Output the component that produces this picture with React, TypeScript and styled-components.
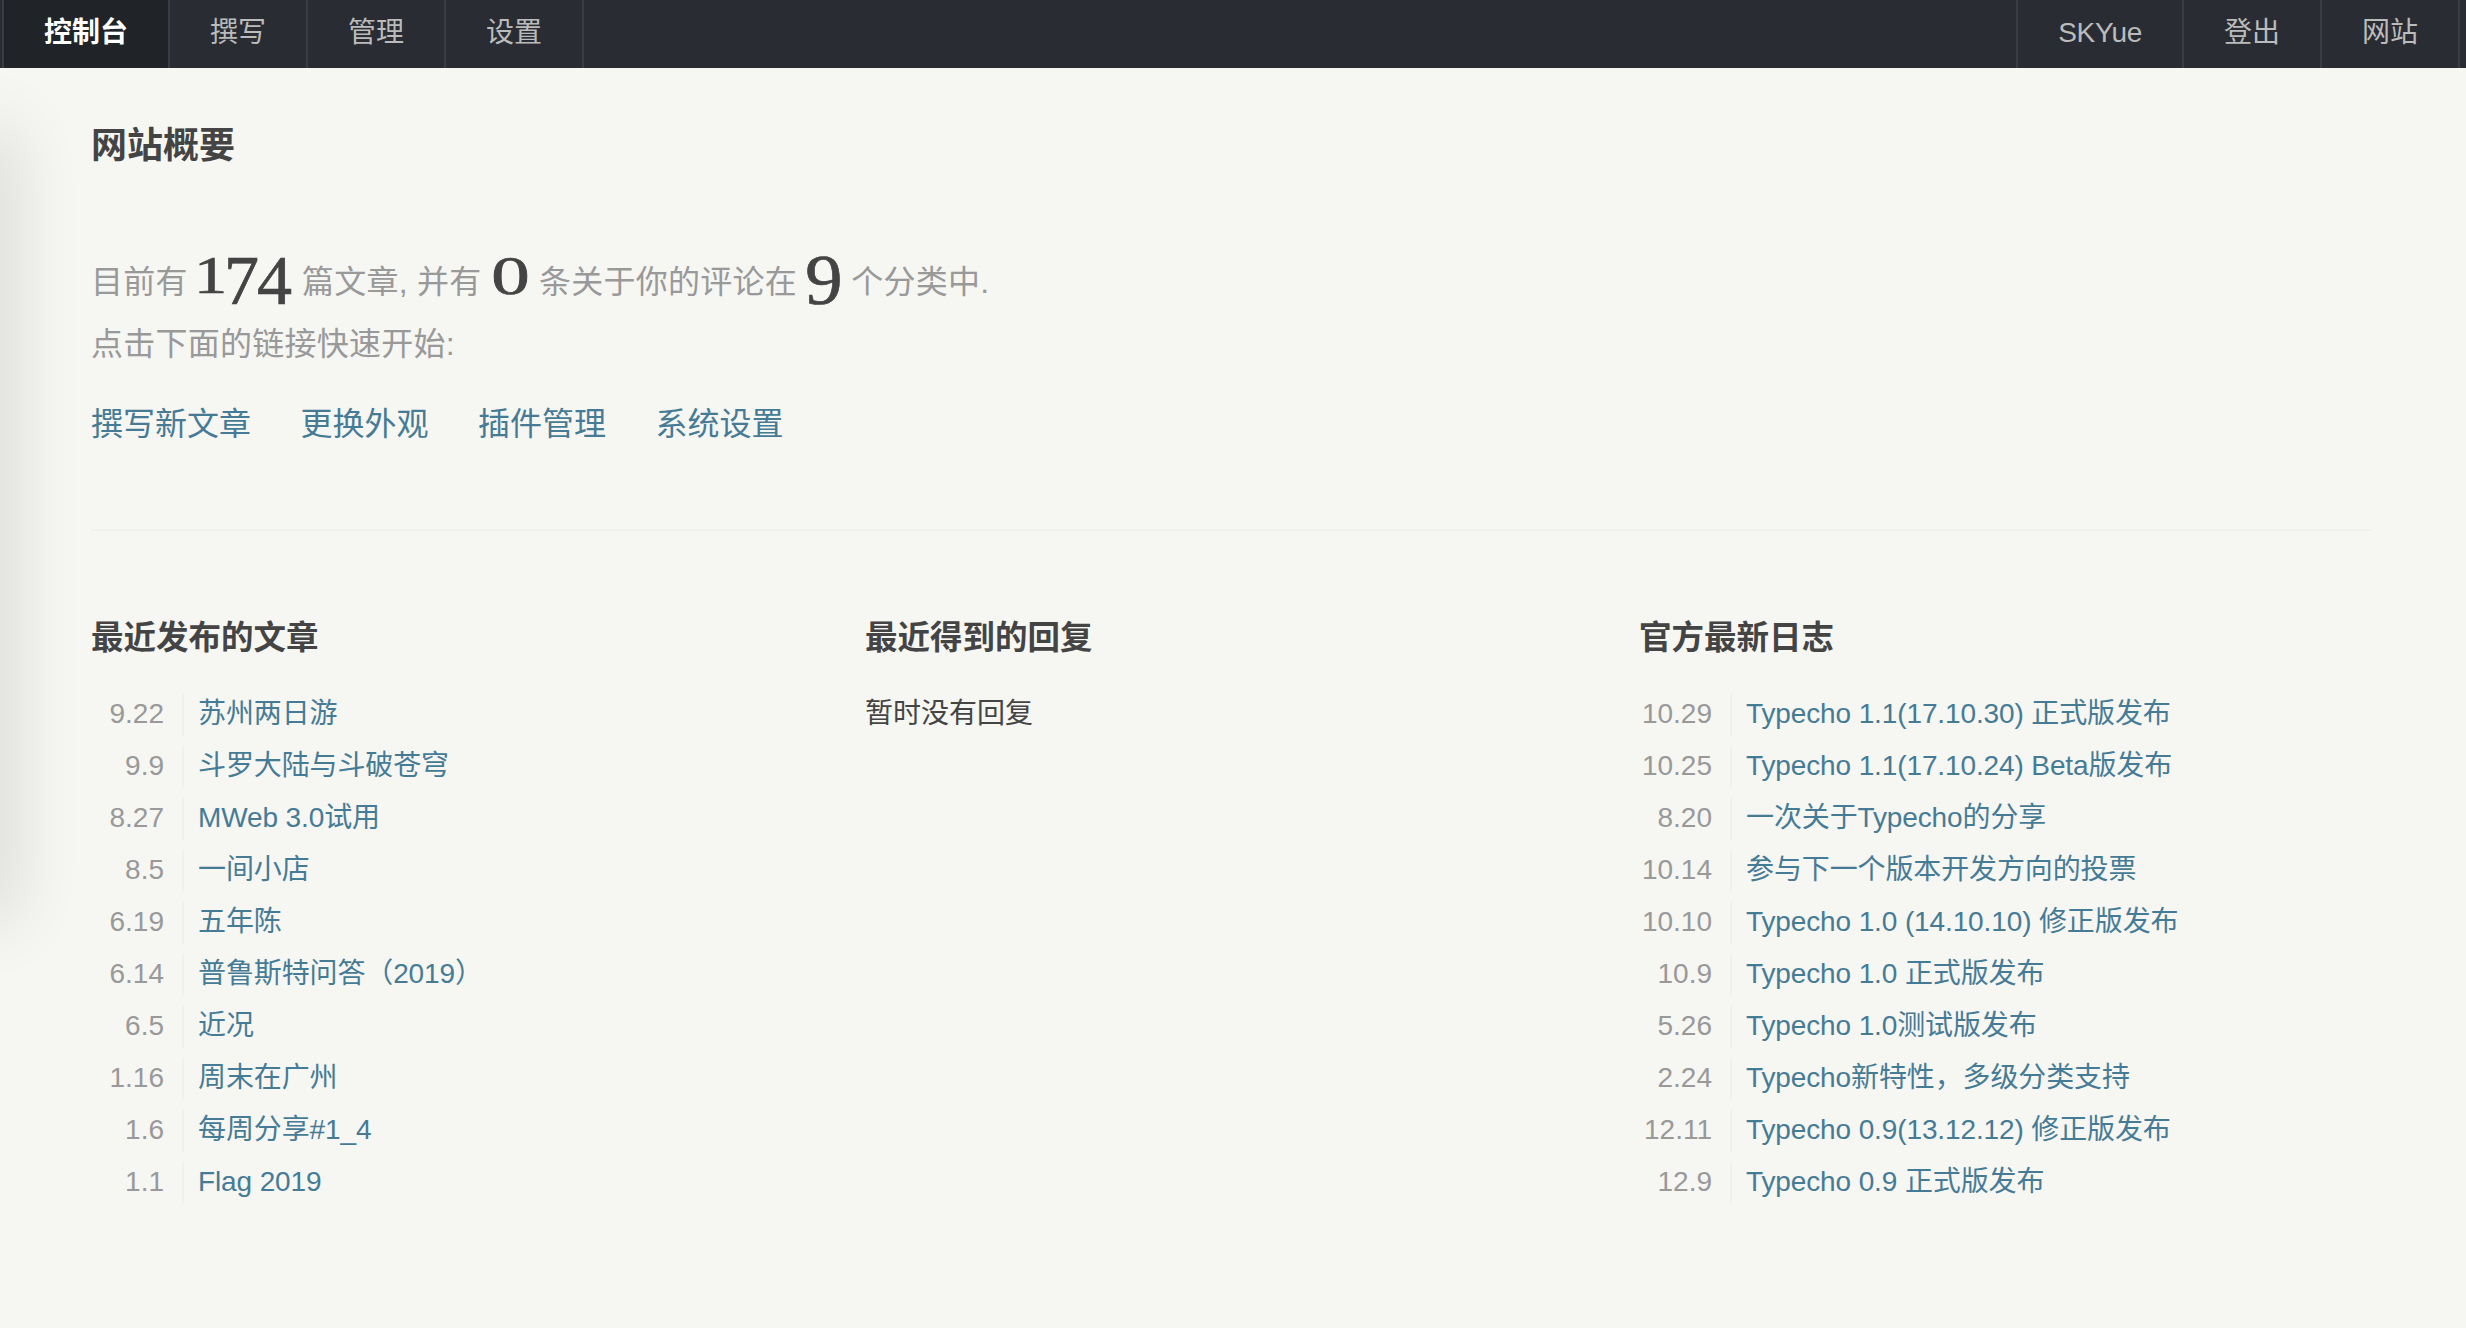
import styled, { createGlobalStyle } from "styled-components";

const GlobalStyle = createGlobalStyle`
  html, body {
    margin: 0;
    padding: 0;
    height: 100%;
    overflow: hidden;
    background: #f6f6f3;
    color: #444;
    font-family: "Liberation Sans", "Noto Sans CJK SC", sans-serif;
  }
`;

const Page = styled.div`
  position: relative;
  height: 1328px;
  overflow: hidden;
`;
const EdgeShadow = styled.div`
  position: absolute;
  left: -30px;
  top: 140px;
  width: 30px;
  height: 770px;
  box-shadow: 0 0 70px 10px rgba(0, 0, 0, 0.14);
`;
const Nav = styled.nav`
  display: flex;
  justify-content: space-between;
  height: 68px;
  padding: 0 6px 0 2px;
  background: #292d33;
`;
const NavGroup = styled.div`
  display: flex;
`;
const NavItem = styled.a<{ $active?: boolean; $first?: boolean }>`
  display: block;
  padding: 0 40px;
  line-height: 65px;
  font-size: 28px;
  color: ${(props) => (props.$active ? "#fff" : "#bbb")};
  font-weight: ${(props) => (props.$active ? "bold" : "normal")};
  background: ${(props) => (props.$active ? "#202328" : "transparent")};
  border-right: 2px solid #383d45;
  border-left: ${(props) => (props.$first ? "2px solid #383d45" : "0")};
`;
const UserItem = styled(NavItem)`
  letter-spacing: -0.4px;
`;
const Main = styled.main`
  position: relative;
  padding: 0 94px 0 91px;
`;
const PageTitle = styled.h2`
  margin: 0;
  padding-top: 54px;
  font-size: 36px;
  line-height: 48px;
  font-weight: bold;
  color: #444;
`;
const Intro = styled.p`
  margin: 81px 0 0;
  font-size: 32px;
  line-height: 62px;
  letter-spacing: 0.25px;
  color: #999;
`;
// old-style figures: each digit gets its own size, stretch and drop below the baseline
const Digit = styled.span<{ $size: number; $stretch: number; $width: number; $drop: number }>`
  display: inline-block;
  width: ${(props) => props.$width}px;
  line-height: 0;
  letter-spacing: 0;
  text-align: center;
  font-family: "Liberation Serif", serif;
  font-size: ${(props) => props.$size}px;
  color: #444;
  -webkit-text-stroke: 0.7px #444;
  vertical-align: ${(props) => -props.$drop}px;
  transform: scaleX(${(props) => props.$stretch});
`;
const QuickLinks = styled.div`
  display: flex;
  gap: 49.5px;
  margin-top: 25px;
  padding-bottom: 81px;
  border-bottom: 2px solid #f0f0ec;
`;
const Link = styled.a`
  color: #467b96;
  text-decoration: none;
`;
const QuickLink = styled(Link)`
  font-size: 32px;
  line-height: 48px;
`;
const Columns = styled.div`
  display: grid;
  grid-template-columns: repeat(3, 774px);
  margin-top: 83px;
`;
const ColumnTitle = styled.h3`
  margin: 0 0 32px;
  font-size: 32.5px;
  line-height: 48px;
  font-weight: bold;
  color: #444;
`;
const List = styled.ul`
  margin: 0;
  padding: 0;
  list-style: none;
`;
const Row = styled.li`
  display: flex;
  height: 42px;
  margin-bottom: 10px;
  line-height: 40px;
  font-size: 28px;
`;
const RowDate = styled.span`
  box-sizing: border-box;
  flex: none;
  width: 93px;
  padding-right: 18px;
  margin-right: 14px;
  text-align: right;
  color: #999;
  border-right: 2px solid #f0f0ec;
`;
const RowLink = styled(Link)`
  letter-spacing: -0.12px;
`;
const Empty = styled.p`
  margin: 0;
  font-size: 28px;
  line-height: 40px;
`;

const digitShapes: Record<string, { size: number; stretch: number; width: number; drop: number }> = {
  "1": { size: 53, stretch: 1.25, width: 27, drop: 0 },
  "7": { size: 70, stretch: 1, width: 32, drop: 11 },
  "4": { size: 70, stretch: 1, width: 37, drop: 11 },
  "0": { size: 55, stretch: 1.4, width: 39, drop: 1 },
  "9": { size: 71, stretch: 1.05, width: 36, drop: 11 },
};

function Count({ value }: { value: string }) {
  return (
    <>
      {value.split("").map((digit, i) => {
        const shape = digitShapes[digit];
        return (
          <Digit key={i} $size={shape.size} $stretch={shape.stretch} $width={shape.width} $drop={shape.drop}>
            {digit}
          </Digit>
        );
      })}
    </>
  );
}

const posts: [string, string][] = [
  ["9.22", "苏州两日游"],
  ["9.9", "斗罗大陆与斗破苍穹"],
  ["8.27", "MWeb 3.0试用"],
  ["8.5", "一间小店"],
  ["6.19", "五年陈"],
  ["6.14", "普鲁斯特问答（2019）"],
  ["6.5", "近况"],
  ["1.16", "周末在广州"],
  ["1.6", "每周分享#1_4"],
  ["1.1", "Flag 2019"],
];

const news: [string, string][] = [
  ["10.29", "Typecho 1.1(17.10.30) 正式版发布"],
  ["10.25", "Typecho 1.1(17.10.24) Beta版发布"],
  ["8.20", "一次关于Typecho的分享"],
  ["10.14", "参与下一个版本开发方向的投票"],
  ["10.10", "Typecho 1.0 (14.10.10) 修正版发布"],
  ["10.9", "Typecho 1.0 正式版发布"],
  ["5.26", "Typecho 1.0测试版发布"],
  ["2.24", "Typecho新特性，多级分类支持"],
  ["12.11", "Typecho 0.9(13.12.12) 修正版发布"],
  ["12.9", "Typecho 0.9 正式版发布"],
];

function DatedList({ rows }: { rows: [string, string][] }) {
  return (
    <List>
      {rows.map(([date, title]) => (
        <Row key={title}>
          <RowDate>{date}</RowDate>
          <RowLink>{title}</RowLink>
        </Row>
      ))}
    </List>
  );
}

export default function App() {
  return (
    <Page>
      <GlobalStyle />
      <Nav>
        <NavGroup>
          <NavItem $active $first>控制台</NavItem>
          <NavItem>撰写</NavItem>
          <NavItem>管理</NavItem>
          <NavItem>设置</NavItem>
        </NavGroup>
        <NavGroup>
          <UserItem $first>SKYue</UserItem>
          <NavItem>登出</NavItem>
          <NavItem>网站</NavItem>
        </NavGroup>
      </Nav>
      <EdgeShadow />
      <Main>
        <PageTitle>网站概要</PageTitle>
        <Intro>
          目前有 <Count value="174" /> 篇文章, 并有 <Count value="0" /> 条关于你的评论在 <Count value="9" /> 个分类中.
          <br />
          点击下面的链接快速开始:
        </Intro>
        <QuickLinks>
          <QuickLink>撰写新文章</QuickLink>
          <QuickLink>更换外观</QuickLink>
          <QuickLink>插件管理</QuickLink>
          <QuickLink>系统设置</QuickLink>
        </QuickLinks>
        <Columns>
          <section>
            <ColumnTitle>最近发布的文章</ColumnTitle>
            <DatedList rows={posts} />
          </section>
          <section>
            <ColumnTitle>最近得到的回复</ColumnTitle>
            <Empty>暂时没有回复</Empty>
          </section>
          <section>
            <ColumnTitle>官方最新日志</ColumnTitle>
            <DatedList rows={news} />
          </section>
        </Columns>
      </Main>
    </Page>
  );
}
